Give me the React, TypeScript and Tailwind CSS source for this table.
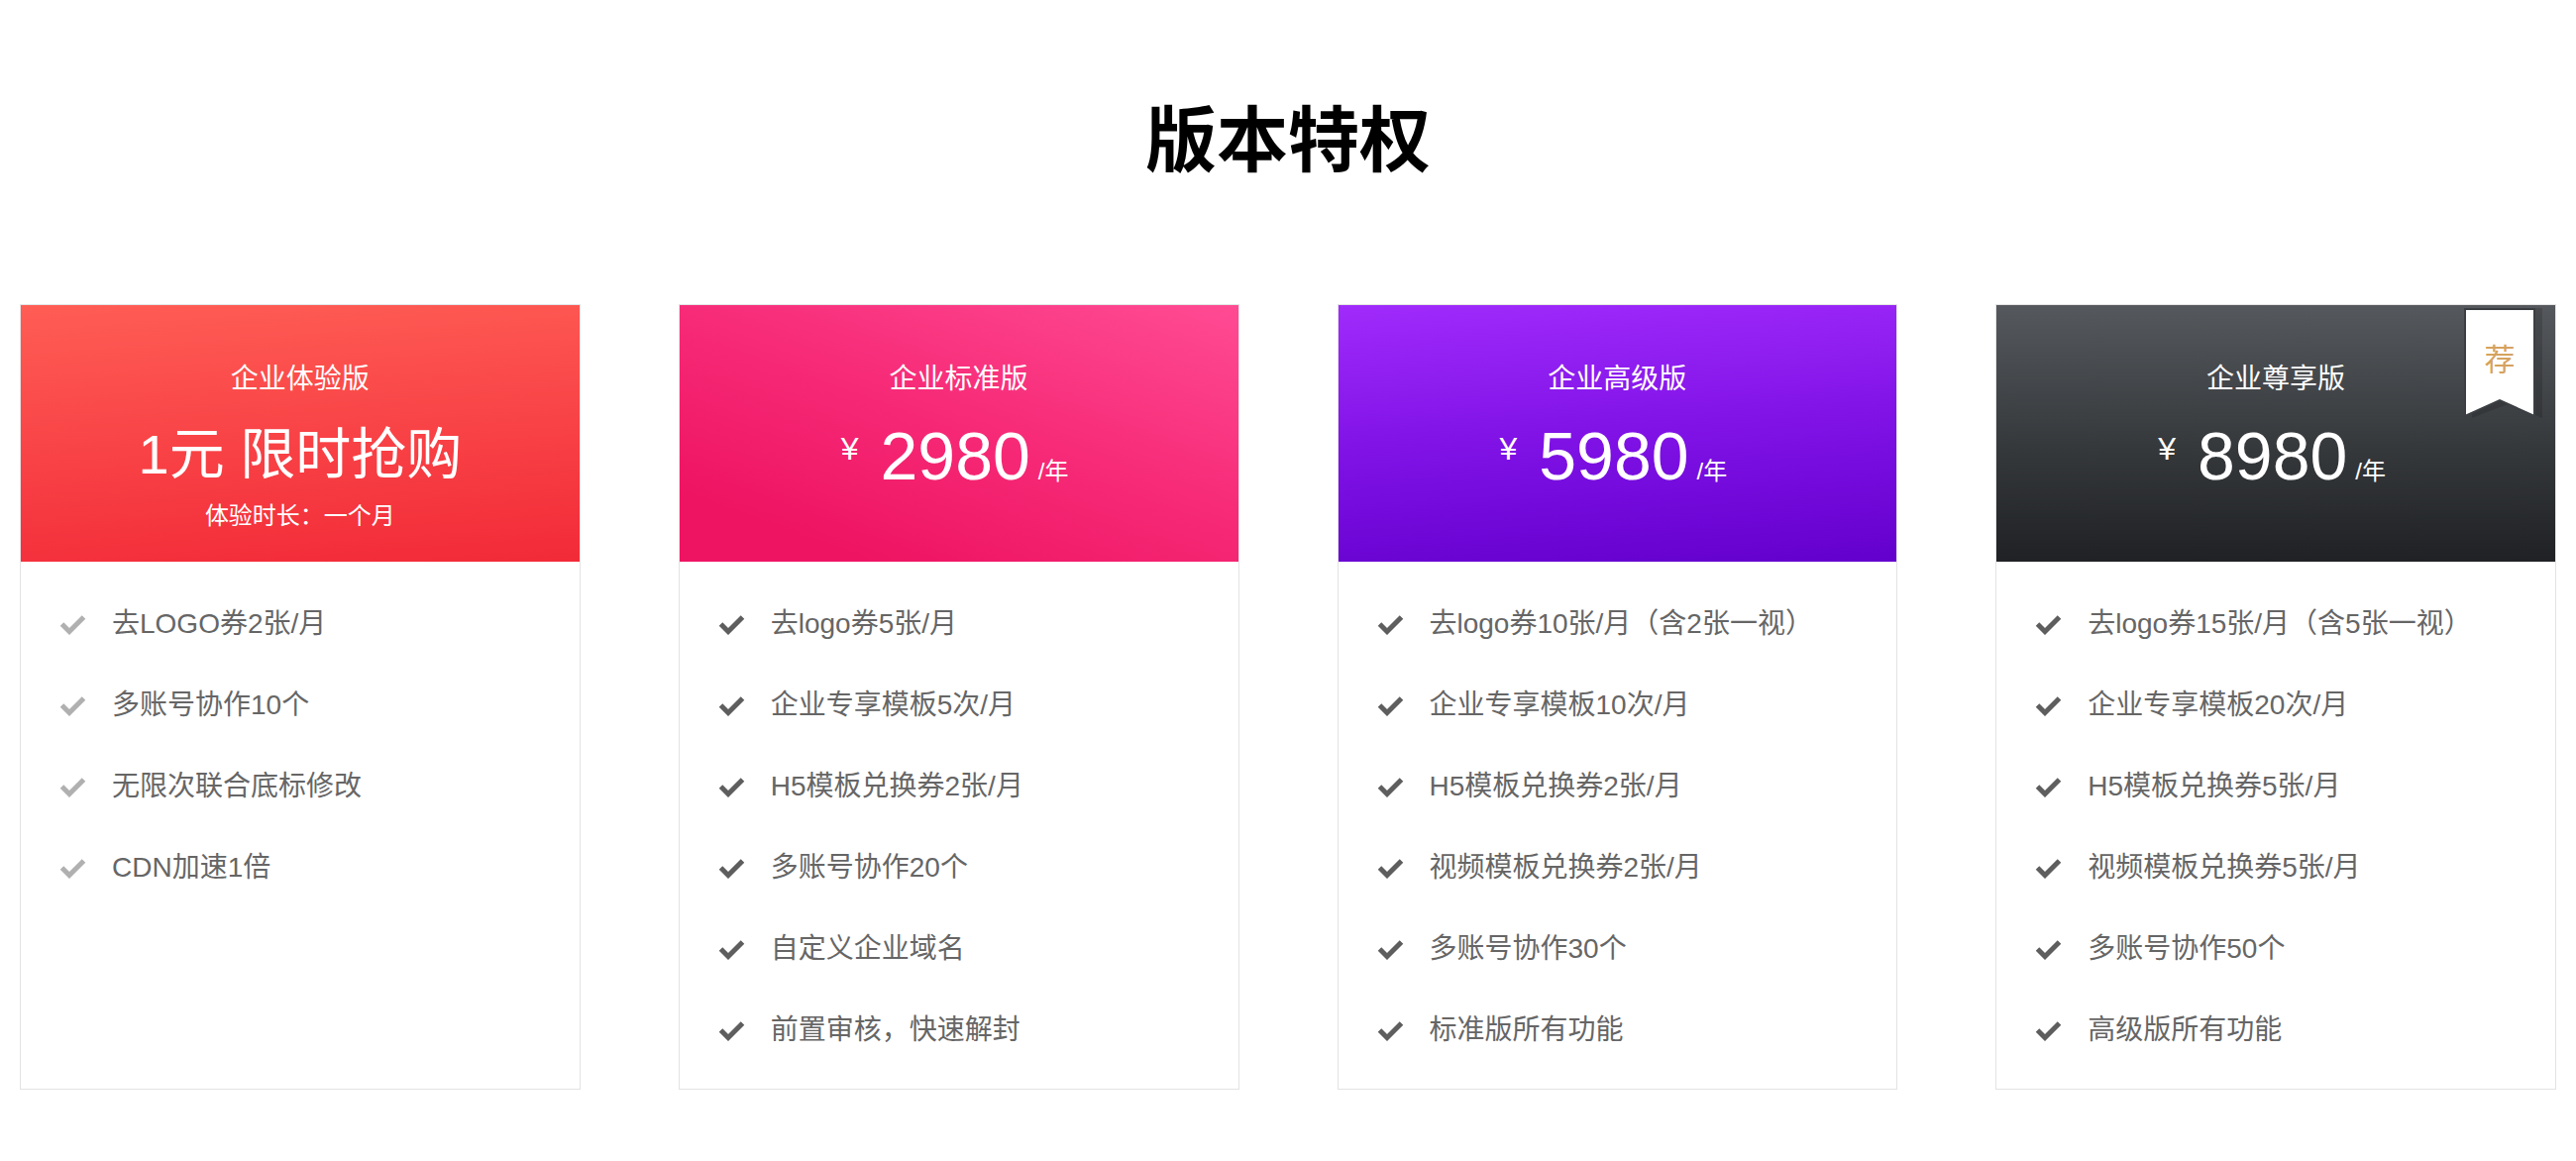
import React from "react";

type Plan = {
  name: string;
  header: string;
  price?: string;
  promo?: { title: string; sub: string };
  features: string[];
  checkClass: string;
  badge?: boolean;
};

const plans: Plan[] = [
  {
    name: "企业体验版",
    header: "bg-[linear-gradient(176deg,#ff5d55_0%,#f22a38_100%)]",
    promo: { title: "1元 限时抢购", sub: "体验时长：一个月" },
    features: ["去LOGO券2张/月", "多账号协作10个", "无限次联合底标修改", "CDN加速1倍"],
    checkClass: "text-[#b0b0b0]",
  },
  {
    name: "企业标准版",
    header: "bg-[linear-gradient(200deg,#ff4b93_0%,#f72b78_45%,#ee1462_85%)]",
    price: "2980",
    features: [
      "去logo券5张/月",
      "企业专享模板5次/月",
      "H5模板兑换券2张/月",
      "多账号协作20个",
      "自定义企业域名",
      "前置审核，快速解封",
    ],
    checkClass: "text-[#5e5e5e]",
  },
  {
    name: "企业高级版",
    header: "bg-[linear-gradient(176deg,#a02bfb_0%,#8012e6_50%,#6300cd_100%)]",
    price: "5980",
    features: [
      "去logo券10张/月（含2张一视）",
      "企业专享模板10次/月",
      "H5模板兑换券2张/月",
      "视频模板兑换券2张/月",
      "多账号协作30个",
      "标准版所有功能",
    ],
    checkClass: "text-[#5e5e5e]",
  },
  {
    name: "企业尊享版",
    header: "bg-[linear-gradient(180deg,#55585c_0%,#36393c_55%,#1f2124_100%)]",
    price: "8980",
    features: [
      "去logo券15张/月（含5张一视）",
      "企业专享模板20次/月",
      "H5模板兑换券5张/月",
      "视频模板兑换券5张/月",
      "多账号协作50个",
      "高级版所有功能",
    ],
    checkClass: "text-[#5e5e5e]",
    badge: true,
  },
];

const Check = ({ className }: { className: string }) => (
  <svg
    width="27"
    height="21"
    viewBox="0 0 27 21"
    className={`shrink-0 blur-[0.4px] ${className}`}
  >
    <polyline
      points="2.5,10 10,17.5 24.5,3"
      fill="none"
      stroke="currentColor"
      strokeWidth="5"
      strokeLinejoin="miter"
    />
  </svg>
);

const Badge = () => (
  <div className="absolute top-[3px] right-[12px] w-[80px] h-[116px]">
    <svg width="80" height="116" viewBox="0 0 80 116" className="absolute inset-0">
      <polygon points="8,0 79,0 79,111 44,97 8,111" fill="rgba(0,0,0,0.14)" />
      <polygon
        points="1,1 71,1 71,109 36,93 1,109"
        fill="#ffffff"
        stroke="#3b3e42"
        strokeWidth="2"
      />
    </svg>
    <div className="relative w-[72px] pt-[32px] text-center text-[31px] leading-[36px] text-[#d6a25e] font-['Noto_Sans_CJK_SC',sans-serif]">
      荐
    </div>
  </div>
);

const PlanCard = ({ plan }: { plan: Plan }) => (
  <div className="flex flex-col border border-[#e3e3e3] bg-white">
    <div className={`relative h-[259px] flex flex-col items-center text-white ${plan.header}`}>
      {plan.badge && <Badge />}
      <div className="mt-[52px] h-[40px] text-[28px] leading-[40px] font-['Noto_Sans_CJK_SC',sans-serif]">
        {plan.name}
      </div>
      {plan.promo ? (
        <>
          <div className="mt-[19px] h-[80px] text-[56px] leading-[80px] font-['Liberation_Sans','Noto_Sans_CJK_SC',sans-serif]">
            {plan.promo.title}
          </div>
          <div className="mt-[4px] text-[24px] leading-[32px] font-['Noto_Sans_CJK_SC',sans-serif]">
            {plan.promo.sub}
          </div>
        </>
      ) : (
        <div className="mt-[20px] h-[80px] pr-[8px] flex items-baseline font-['Liberation_Sans',sans-serif]">
          <span className="self-start mt-[17px] mr-[22px] text-[32px] leading-none">¥</span>
          <span className="text-[68px] leading-[80px]">{plan.price}</span>
          <span className="ml-[8px] text-[24px] font-['Liberation_Sans','Noto_Sans_CJK_SC',sans-serif]">
            /年
          </span>
        </div>
      )}
    </div>
    <ul className="flex flex-col pt-[22px] pb-[18px] pl-[39px] pr-[20px]">
      {plan.features.map((f) => (
        <li key={f} className="h-[82px] flex items-center gap-[26px]">
          <Check className={plan.checkClass} />
          <span className="text-[28px] text-[#666666] font-['Liberation_Sans','Noto_Sans_CJK_SC',sans-serif]">
            {f}
          </span>
        </li>
      ))}
    </ul>
  </div>
);

export default function App() {
  return (
    <div className="w-[2600px] min-h-[1172px] bg-white">
      <h1 className="pt-[100px] text-center text-[72px] leading-[72px] font-bold text-black font-['Noto_Sans_CJK_SC',sans-serif]">
        版本特权
      </h1>
      <div className="mt-[135px] grid grid-cols-4 gap-[99px] px-[20px]">
        {plans.map((p) => (
          <PlanCard key={p.name} plan={p} />
        ))}
      </div>
    </div>
  );
}
